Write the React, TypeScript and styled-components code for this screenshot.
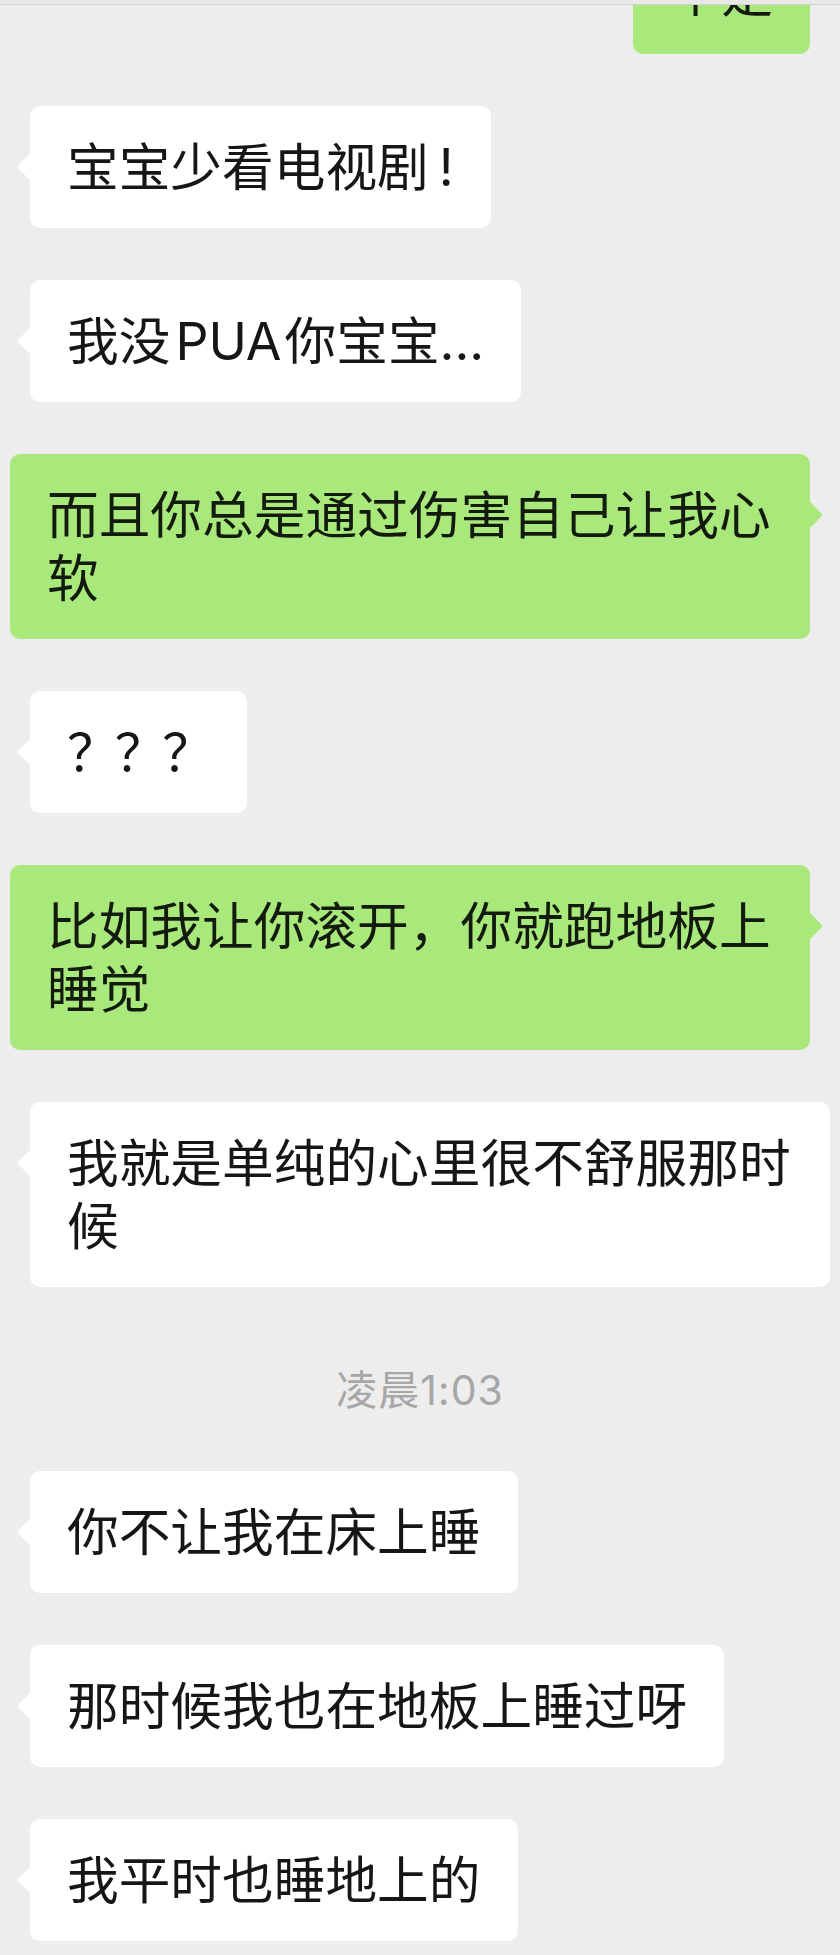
import React from 'react';
import styled, { createGlobalStyle } from 'styled-components';

interface Message {
	kind: 'mine' | 'theirs' | 'time';
	text: React.ReactNode;
}

const GlobalStyle = createGlobalStyle`
	html, body {
		margin: 0;
		padding: 0;
		background: #ededed;
	}
`;

const Page = styled.div`
	width: 840px;
	height: 1955px;
	background: #ededed;
	overflow: hidden;
	display: flex;
	flex-direction: column;
	font-family: Inter, "Noto Sans CJK SC", sans-serif;
`;

const TopEdge = styled.div`
	height: 4px;
	flex: none;
	background: #e8e8e8;
	border-bottom: 1px solid #d2d2d2;
	position: relative;
	z-index: 2;
`;

const ChatList = styled.div`
	display: flex;
	flex-direction: column;
	gap: 52px;
	margin-top: -73px;
`;

const Row = styled.div<{ $mine?: boolean }>`
	display: flex;
	justify-content: ${p => (p.$mine ? 'flex-end' : 'flex-start')};
	padding: ${p => (p.$mine ? '0 30px 0 10px' : '0 10px 0 30px')};
`;

const Bubble = styled.div<{ $mine?: boolean }>`
	position: relative;
	box-sizing: border-box;
	max-width: 800px;
	padding: 29.5px 37px;
	border-radius: 10px;
	background: ${p => (p.$mine ? '#a9e97c' : '#ffffff')};
	color: ${p => (p.$mine ? '#131a0e' : '#161616')};
	font-size: 51.7px;
	line-height: 63px;
	word-break: break-all;

	&::before {
		content: '';
		position: absolute;
		top: 61px;
		${p => (p.$mine ? 'right: -9px;' : 'left: -9px;')}
		width: 20px;
		height: 20px;
		background: inherit;
		border-radius: 3px;
		transform: translateY(-50%) rotate(45deg);
	}
`;

const Bang = styled.span`
	margin-left: 10px;
`;

const Latin = styled.span`
	margin: 0 3px 0 5px;
`;

const Marks = styled.span`
	letter-spacing: -4px;
`;

const TimeRow = styled.div`
	padding: 31px 0 9px;
	line-height: 40px;
	text-align: center;
	font-size: 41px;
	letter-spacing: 1px;
	color: #a7a7a7;
`;

const messages: Message[] = [
	{ kind: 'mine', text: '个是' },
	{ kind: 'theirs', text: <>宝宝少看电视剧<Bang>!</Bang></> },
	{ kind: 'theirs', text: <>我没<Latin>PUA</Latin>你宝宝...</> },
	{ kind: 'mine', text: '而且你总是通过伤害自己让我心软' },
	{ kind: 'theirs', text: <Marks>？？？</Marks> },
	{ kind: 'mine', text: '比如我让你滚开，你就跑地板上睡觉' },
	{ kind: 'theirs', text: '我就是单纯的心里很不舒服那时候' },
	{ kind: 'time', text: '凌晨1:03' },
	{ kind: 'theirs', text: '你不让我在床上睡' },
	{ kind: 'theirs', text: '那时候我也在地板上睡过呀' },
	{ kind: 'theirs', text: '我平时也睡地上的' }
];

const App = () => (
	<>
		<GlobalStyle/>
		<Page>
			<TopEdge/>
			<ChatList>
				{messages.map((m, i) =>
					m.kind === 'time'
						? <TimeRow key={i}>{m.text}</TimeRow>
						: (
							<Row key={i} $mine={m.kind === 'mine'}>
								<Bubble $mine={m.kind === 'mine'}>{m.text}</Bubble>
							</Row>
						)
				)}
			</ChatList>
		</Page>
	</>
);

export default App;
